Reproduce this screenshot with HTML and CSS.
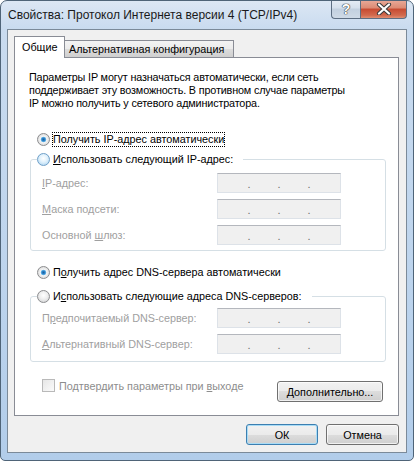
FILE: index.html
```html
<!DOCTYPE html>
<html lang="ru">

<head>
    <meta charset="UTF-8">
    <meta name="viewport" content="width=device-width, initial-scale=1.0">
    <title>Свойства: Протокол Интернета версии 4 (TCP/IPv4)</title>
    <link rel="stylesheet" href="styles.css">
</head>

<body>
    <div class="window">
        <div class="titlebar">
            <span class="title">Свойства: Протокол Интернета версии 4 (TCP/IPv4)</span>
            <div class="caption-buttons">
                <span class="cap-btn help">?</span>
                <span class="cap-btn close">
                    <svg width="16" height="12" viewBox="0 0 16 12">
                        <path d="M3 1.5 L13 10.5 M13 1.5 L3 10.5" stroke="#3b3b3b" stroke-width="4.2" stroke-linecap="round" />
                        <path d="M3 1.5 L13 10.5 M13 1.5 L3 10.5" stroke="#ffffff" stroke-width="2.2" stroke-linecap="round" />
                    </svg>
                </span>
            </div>
        </div>

        <div class="client">
            <div class="tabs">
                <div class="tab active">Общие</div>
                <div class="tab">Альтернативная конфигурация</div>
            </div>

            <div class="tab-panel">
                <p class="intro">Параметры IP могут назначаться автоматически, если сеть<br>поддерживает эту возможность. В противном случае параметры<br>IP можно получить у сетевого администратора.</p>

                <div class="radio-row ip-auto">
                    <span class="radio checked"></span>
                    <span class="focus">Получить IP-адрес автоматически</span>
                </div>

                <fieldset class="group ip-group">
                    <legend class="radio-row">
                        <span class="radio hot"></span>
                        <span><u>И</u>спользовать следующий IP-адрес:</span>
                    </legend>
                    <div class="field">
                        <span class="label"><u>I</u>P-адрес:</span>
                        <div class="ip"><span></span><span class="dot">.</span><span></span><span class="dot">.</span><span></span><span class="dot">.</span><span></span></div>
                    </div>
                    <div class="field">
                        <span class="label"><u>М</u>аска подсети:</span>
                        <div class="ip"><span></span><span class="dot">.</span><span></span><span class="dot">.</span><span></span><span class="dot">.</span><span></span></div>
                    </div>
                    <div class="field">
                        <span class="label">Основной <u>ш</u>люз:</span>
                        <div class="ip"><span></span><span class="dot">.</span><span></span><span class="dot">.</span><span></span><span class="dot">.</span><span></span></div>
                    </div>
                </fieldset>

                <div class="radio-row dns-auto">
                    <span class="radio checked"></span>
                    <span>П<u>о</u>лучить адрес DNS-сервера автоматически</span>
                </div>

                <fieldset class="group dns-group">
                    <legend class="radio-row">
                        <span class="radio"></span>
                        <span>И<u>с</u>пользовать следующие адреса DNS-серверов:</span>
                    </legend>
                    <div class="field">
                        <span class="label">П<u>р</u>едпочитаемый DNS-сервер:</span>
                        <div class="ip"><span></span><span class="dot">.</span><span></span><span class="dot">.</span><span></span><span class="dot">.</span><span></span></div>
                    </div>
                    <div class="field">
                        <span class="label"><u>А</u>льтернативный DNS-сервер:</span>
                        <div class="ip"><span></span><span class="dot">.</span><span></span><span class="dot">.</span><span></span><span class="dot">.</span><span></span></div>
                    </div>
                </fieldset>

                <div class="bottom-row">
                    <div class="check-row">
                        <span class="checkbox"></span>
                        <span>Подтвердить параметры при <u>в</u>ыходе</span>
                    </div>
                    <button class="btn advanced"><u>Д</u>ополнительно...</button>
                </div>
            </div>

            <div class="dialog-buttons">
                <button class="btn default">ОК</button>
                <button class="btn">Отмена</button>
            </div>
        </div>
    </div>
</body>

</html>
```

FILE: styles.css
```css
body {
    margin: 0;
    padding: 0;
    font-family: 'Liberation Sans', Arial, sans-serif;
    font-size: 12px;
    color: #000;
    background-color: #fff;
}

.window {
    width: 414px;
    height: 461px;
    box-sizing: border-box;
    display: flex;
    flex-direction: column;
    border: 1px solid #4f6478;
    border-radius: 7px 7px 5px 5px;
    background: linear-gradient(to bottom, #dce7f4 0, #c9dbef 28px, #bdd4ed 60%, #b2cdea 100%);
    overflow: hidden;
}

.titlebar {
    height: 28px;
    display: flex;
    align-items: center;
    flex-shrink: 0;
}

.title {
    padding-left: 7px;
    color: #1a1a1a;
}

.caption-buttons {
    display: flex;
    align-self: flex-start;
    margin-left: auto;
    margin-right: 6px;
    margin-top: -1px;
}

.cap-btn {
    height: 19px;
    box-sizing: border-box;
    display: flex;
    align-items: center;
    justify-content: center;
    border: 1px solid #5d6e82;
    border-top: none;
}

.help {
    width: 29px;
    border-right: none;
    border-radius: 0 0 0 4px;
    background: linear-gradient(to bottom, #e6edf5 0, #d5e0ec 45%, #c2d0df 50%, #cfdae6 100%);
    color: #fff;
    font-weight: bold;
    font-size: 14px;
    text-shadow: 0 0 1px #333, 0 0 1px #333, 0 0 1px #333;
}

.close {
    width: 47px;
    border-radius: 0 0 4px 0;
    background: linear-gradient(to bottom, #e9ab9a 0, #dc8a73 45%, #c74a31 50%, #d26a4e 85%, #e08e72 100%);
}

.client {
    flex: 1;
    margin: 0 6px 7px 6px;
    border: 1px solid #7b8a99;
    background-color: #f0f0f0;
    padding: 6px 7px 0 6px;
    font-size: 10.8px;
    white-space: nowrap;
}

.tabs {
    display: flex;
    align-items: flex-end;
    height: 22px;
    margin-bottom: -1px;
}

.tab {
    box-sizing: border-box;
    height: 18px;
    width: 169px;
    padding-left: 4px;
    line-height: 16px;
    border-top: 1px solid #898c95;
    border-right: 1px solid #898c95;
    border-bottom: 1px solid #898c95;
    background: linear-gradient(to bottom, #f3f3f3 0, #ebebeb 50%, #dddddd 50%, #cfcfcf 100%);
}

.tab.active {
    position: relative;
    z-index: 1;
    width: 51px;
    height: 22px;
    padding-left: 7px;
    line-height: 20px;
    border-left: 1px solid #898c95;
    border-bottom: none;
    background: #fff;
}

.tab-panel {
    box-sizing: border-box;
    width: 385px;
    height: 359px;
    border: 1px solid #898c95;
    background-color: #fff;
    padding: 0 12px 0 15px;
}

.intro {
    margin: 13px 0 0 -1px;
    line-height: 13px;
    letter-spacing: -0.15px;
}

.radio-row {
    display: flex;
    align-items: center;
    height: 16px;
    gap: 3px;
}

.ip-auto {
    margin: 21px 0 0 7px;
}

.dns-auto {
    margin: 13px 0 0 7px;
}

.focus {
    outline: 1px dotted #000;
    line-height: 13px;
}

.radio {
    width: 13px;
    height: 13px;
    box-sizing: border-box;
    border-radius: 50%;
    border: 1px solid #8b8c8e;
    background: radial-gradient(circle at 50% 40%, #ffffff 0, #eeeeee 45%, #c9cacc 100%);
    flex-shrink: 0;
}

.radio.checked {
    background: radial-gradient(circle, #1c5fa0 0, #2e84c8 20%, #6cb9ea 32%, #f4f4f4 40%, #e1e1e1 70%, #c8c8c8 100%);
}

.radio.hot {
    border-color: #6f9fc8;
    background: radial-gradient(circle at 50% 40%, #ffffff 0, #e0f1fc 45%, #9fcdee 100%);
}

.group {
    margin: 4px 0 0 0;
    padding: 0 0 5px 0;
    width: 356px;
    box-sizing: border-box;
    border: 1px solid #d5dfe5;
    border-radius: 3px;
    display: flex;
    flex-direction: column;
    gap: 6px;
}

.group legend {
    margin-left: 6px;
    padding: 0 10px 0 0;
}

.ip-group .field:first-of-type {
    margin-top: 6px;
}

.dns-group {
    margin-top: 8px;
    padding-bottom: 7px;
}

.dns-group .field:first-of-type {
    margin-top: 4px;
}

.field {
    display: flex;
    align-items: center;
    height: 20px;
}

.label {
    width: 175px;
    padding-left: 11px;
    color: #a0a0a0;
}

.ip {
    box-sizing: border-box;
    width: 124px;
    height: 20px;
    display: grid;
    grid-template-columns: 29px 4px 26px 4px 26px 4px 1fr;
    border: 1px solid #dde2e8;
    border-top-color: #b4b7bd;
    background-color: #f0f0f0;
}

.dot {
    text-align: center;
    color: #6b6b6b;
    line-height: 20px;
}

.bottom-row {
    display: flex;
    justify-content: space-between;
    align-items: flex-start;
    margin-top: 17px;
    padding: 0 3px 0 12px;
}

.check-row {
    display: flex;
    align-items: center;
    gap: 4px;
    height: 13px;
    color: #8d8d8d;
}

.checkbox {
    width: 13px;
    height: 13px;
    box-sizing: border-box;
    border: 1px solid #b9b9b9;
    background: linear-gradient(135deg, #e6e6e6, #fbfbfb);
}

.btn {
    box-sizing: border-box;
    height: 21px;
    padding: 0;
    font-family: inherit;
    font-size: inherit;
    color: #000;
    border: 1px solid #707070;
    border-radius: 3px;
    background: linear-gradient(to bottom, #f2f2f2 0, #ebebeb 50%, #dddddd 50%, #cfcfcf 100%);
    box-shadow: inset 0 0 0 1px rgba(255, 255, 255, 0.7);
}

.advanced {
    width: 106px;
    margin-top: 2px;
}

.dialog-buttons {
    display: flex;
    justify-content: flex-end;
    gap: 8px;
    width: 385px;
    margin-top: 8px;
}

.dialog-buttons .btn {
    width: 73px;
}

.btn.default {
    width: 72px;
    border-color: #3c7fb1;
    box-shadow: inset 0 0 0 1px #a9dcf6;
}
```
